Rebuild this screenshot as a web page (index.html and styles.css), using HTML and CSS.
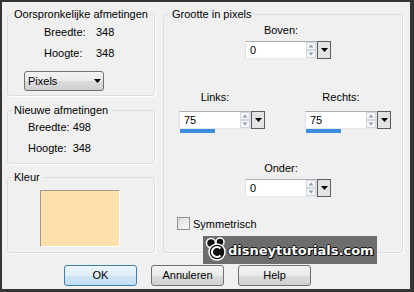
FILE: index.html
```html
<!DOCTYPE html>
<html lang="nl">
<head>
    <meta charset="UTF-8">
    <meta name="viewport" content="width=device-width, initial-scale=1.0">
    <title>Rand toevoegen</title>
    <link rel="stylesheet" href="styles.css">
</head>
<body>
    <div class="dialog">
        <div class="main">
            <div class="left">
                <fieldset class="group g-orig">
                    <legend>Oorspronkelijke afmetingen</legend>
                    <div class="dim-row"><span class="dim-label">Breedte:</span><span>348</span></div>
                    <div class="dim-row"><span class="dim-label">Hoogte:</span><span>348</span></div>
                    <div class="combo">
                        <span>Pixels</span>
                        <svg width="7" height="4" viewBox="0 0 7 4"><polygon points="0,0 7,0 3.5,4" fill="#000"/></svg>
                    </div>
                </fieldset>

                <fieldset class="group g-new">
                    <legend>Nieuwe afmetingen</legend>
                    <div class="new-row">Breedte: 498</div>
                    <div class="new-row">Hoogte:&nbsp; 348</div>
                </fieldset>

                <fieldset class="group g-color">
                    <legend>Kleur</legend>
                    <div class="swatch"></div>
                </fieldset>
            </div>

            <fieldset class="group g-size">
                <legend>Grootte in pixels</legend>

                <div class="spin spin-top">
                    <div class="spin-label">Boven:</div>
                    <div class="spin-box">
                        <div class="spin-field">
                            <span>0</span>
                            <svg class="spin-arrows" width="10" height="16" viewBox="0 0 10 16">
                                <rect x="0.5" y="0.5" width="9" height="7" fill="#f4f6f9" stroke="#d3d8df"/>
                                <rect x="0.5" y="8.5" width="9" height="7" fill="#f4f6f9" stroke="#d3d8df"/>
                                <polygon points="2.5,5.5 5,2.5 7.5,5.5" fill="#8d9cb0"/>
                                <polygon points="2.5,10.5 7.5,10.5 5,13.5" fill="#8d9cb0"/>
                            </svg>
                        </div>
                        <div class="spin-drop">
                            <svg width="7" height="4" viewBox="0 0 7 4"><polygon points="0,0 7,0 3.5,4" fill="#000"/></svg>
                        </div>
                    </div>
                </div>

                <div class="spin-pair">
                    <div class="spin">
                        <div class="spin-label">Links:</div>
                        <div class="spin-box">
                            <div class="spin-field">
                                <span>75</span>
                                <svg class="spin-arrows" width="10" height="16" viewBox="0 0 10 16">
                                    <rect x="0.5" y="0.5" width="9" height="7" fill="#f4f6f9" stroke="#d3d8df"/>
                                    <rect x="0.5" y="8.5" width="9" height="7" fill="#f4f6f9" stroke="#d3d8df"/>
                                    <polygon points="2.5,5.5 5,2.5 7.5,5.5" fill="#8d9cb0"/>
                                    <polygon points="2.5,10.5 7.5,10.5 5,13.5" fill="#8d9cb0"/>
                                </svg>
                            </div>
                            <div class="spin-drop">
                                <svg width="7" height="4" viewBox="0 0 7 4"><polygon points="0,0 7,0 3.5,4" fill="#000"/></svg>
                            </div>
                        </div>
                        <div class="spin-bar" style="width: 35px"></div>
                    </div>
                    <div class="spin">
                        <div class="spin-label">Rechts:</div>
                        <div class="spin-box">
                            <div class="spin-field">
                                <span>75</span>
                                <svg class="spin-arrows" width="10" height="16" viewBox="0 0 10 16">
                                    <rect x="0.5" y="0.5" width="9" height="7" fill="#f4f6f9" stroke="#d3d8df"/>
                                    <rect x="0.5" y="8.5" width="9" height="7" fill="#f4f6f9" stroke="#d3d8df"/>
                                    <polygon points="2.5,5.5 5,2.5 7.5,5.5" fill="#8d9cb0"/>
                                    <polygon points="2.5,10.5 7.5,10.5 5,13.5" fill="#8d9cb0"/>
                                </svg>
                            </div>
                            <div class="spin-drop">
                                <svg width="7" height="4" viewBox="0 0 7 4"><polygon points="0,0 7,0 3.5,4" fill="#000"/></svg>
                            </div>
                        </div>
                        <div class="spin-bar" style="width: 35px"></div>
                    </div>
                </div>

                <div class="spin spin-bottom">
                    <div class="spin-label">Onder:</div>
                    <div class="spin-box">
                        <div class="spin-field">
                            <span>0</span>
                            <svg class="spin-arrows" width="10" height="16" viewBox="0 0 10 16">
                                <rect x="0.5" y="0.5" width="9" height="7" fill="#f4f6f9" stroke="#d3d8df"/>
                                <rect x="0.5" y="8.5" width="9" height="7" fill="#f4f6f9" stroke="#d3d8df"/>
                                <polygon points="2.5,5.5 5,2.5 7.5,5.5" fill="#8d9cb0"/>
                                <polygon points="2.5,10.5 7.5,10.5 5,13.5" fill="#8d9cb0"/>
                            </svg>
                        </div>
                        <div class="spin-drop">
                            <svg width="7" height="4" viewBox="0 0 7 4"><polygon points="0,0 7,0 3.5,4" fill="#000"/></svg>
                        </div>
                    </div>
                </div>

                <div class="check-row">
                    <span class="check"></span>
                    <span>Symmetrisch</span>
                </div>
            </fieldset>
        </div>

        <div class="buttons">
            <div class="btn btn-default">OK</div>
            <div class="btn">Annuleren</div>
            <div class="btn">Help</div>
        </div>

        <div class="watermark">
            <svg width="22" height="26" viewBox="0 0 22 26">
                <circle cx="6" cy="6" r="4.5" fill="#111" stroke="#fff" stroke-width="1.5"/>
                <circle cx="15" cy="5" r="4" fill="#111" stroke="#fff" stroke-width="1.5"/>
                <circle cx="12" cy="15" r="8" fill="#111" stroke="#fff" stroke-width="1.5"/>
                <path d="M15.5 11.5 A5 5 0 1 0 15.5 18.5" fill="none" stroke="#fff" stroke-width="2"/>
            </svg>
            <span class="wm-text">disneytutorials.com</span>
        </div>
    </div>
</body>
</html>
```

FILE: styles.css
```css
body {
    margin: 0;
    background: #333;
    font-family: "Liberation Sans", Arial, sans-serif;
    font-size: 11px;
    color: #000;
}

.dialog {
    position: relative;
    width: 414px;
    height: 292px;
    box-sizing: border-box;
    border-style: solid;
    border-color: #353535;
    border-width: 2px 4px 3px 2px;
    background: #f0f0f0;
    display: flex;
    flex-direction: column;
}

.main {
    display: flex;
    gap: 8px;
    padding: 5px 7px 0 5px;
}

.left {
    width: 148px;
    display: flex;
    flex-direction: column;
}

/* group boxes */
.group {
    margin: 0;
    min-width: 0;
    padding: 0 0 4px 4px;
    border: 1px solid #d5dfe5;
    border-radius: 3px;
    box-shadow: 1px 1px 0 #fff;
}

.group legend {
    padding: 0 2px;
    line-height: 14px;
}

.g-new {
    margin-top: 7px;
}

.g-color {
    margin-top: 6px;
    padding-bottom: 5px;
}

.g-size {
    flex: 1;
}

.g-size legend {
    margin-left: 2px;
}

.dim-row {
    display: flex;
    align-items: center;
    height: 21px;
    margin-left: 32px;
}

.dim-label {
    width: 52px;
}

.combo {
    display: flex;
    align-items: center;
    justify-content: space-between;
    box-sizing: border-box;
    width: 80px;
    height: 20px;
    margin: 8px 0 0 12px;
    padding: 0 2px 0 3px;
    border: 1px solid #707070;
    border-radius: 3px;
    background: linear-gradient(#f2f2f2 0%, #ebebeb 50%, #dddddd 51%, #cfcfcf 100%);
}

.new-row {
    height: 21px;
    line-height: 21px;
    margin-left: 16px;
}

.swatch {
    box-sizing: border-box;
    width: 80px;
    height: 57px;
    margin: 6px 0 0 28px;
    background: #ffdfac;
    border: 1px solid;
    border-color: #a09a90 #fff #fff #a09a90;
}

/* spin boxes */
.spin {
    width: 86px;
}

.spin-label {
    width: 72px;
    height: 18px;
    line-height: 18px;
    text-align: center;
}

.spin-box {
    display: flex;
    height: 18px;
    margin-top: 2px;
}

.spin-field {
    display: flex;
    align-items: center;
    justify-content: space-between;
    box-sizing: border-box;
    width: 72px;
    padding-left: 4px;
    background: #fff;
    border: 1px solid;
    border-color: #abadb3 #dbdfe6 #e3e9ef #e2e3ea;
}

.spin-drop {
    display: flex;
    align-items: center;
    justify-content: center;
    box-sizing: border-box;
    width: 14px;
    border: 1px solid #5c5c5c;
    background: #e3e3e3;
}

.spin-bar {
    height: 4px;
    margin-left: 1px;
    background: #3d8ee0;
}

.spin-top {
    margin-left: 77px;
}

.spin-pair {
    display: flex;
    gap: 40px;
    margin: 29px 0 0 11px;
}

.spin-pair .spin-box {
    margin-top: 5px;
}

.spin-bottom {
    margin: 26px 0 0 77px;
}

.check-row {
    display: flex;
    align-items: center;
    gap: 3px;
    margin: 20px 0 0 9px;
}

.check {
    box-sizing: border-box;
    width: 13px;
    height: 13px;
    border: 1px solid #8e8f8f;
    background: linear-gradient(135deg, #d8d8d8, #fdfdfd);
}

/* buttons */
.buttons {
    display: flex;
    gap: 14px;
    margin-top: auto;
    padding: 0 0 3px 62px;
}

.btn {
    box-sizing: border-box;
    width: 73px;
    height: 21px;
    line-height: 19px;
    text-align: center;
    border: 1px solid #707070;
    border-radius: 3px;
    background: linear-gradient(#f2f2f2 0%, #ebebeb 50%, #dddddd 51%, #cfcfcf 100%);
}

.btn-default {
    border-color: #3c7fb1;
    background: linear-gradient(#eef6fc 0%, #dfeefa 50%, #cfe5f6 51%, #c2ddf3 100%);
}

/* site watermark over the dialog */
.watermark {
    position: absolute;
    left: 201px;
    top: 234px;
    width: 174px;
    height: 28px;
    box-sizing: border-box;
    padding-left: 2px;
    display: flex;
    align-items: center;
    gap: 1px;
    background: #6d6d6d;
}

.wm-text {
    font-family: "DejaVu Sans", sans-serif;
    font-weight: bold;
    font-size: 13px;
    color: #fff;
    text-shadow: -1px 0 #111, 1px 0 #111, 0 -1px #111, 0 1px #111, 1px 1px #000;
}
```
